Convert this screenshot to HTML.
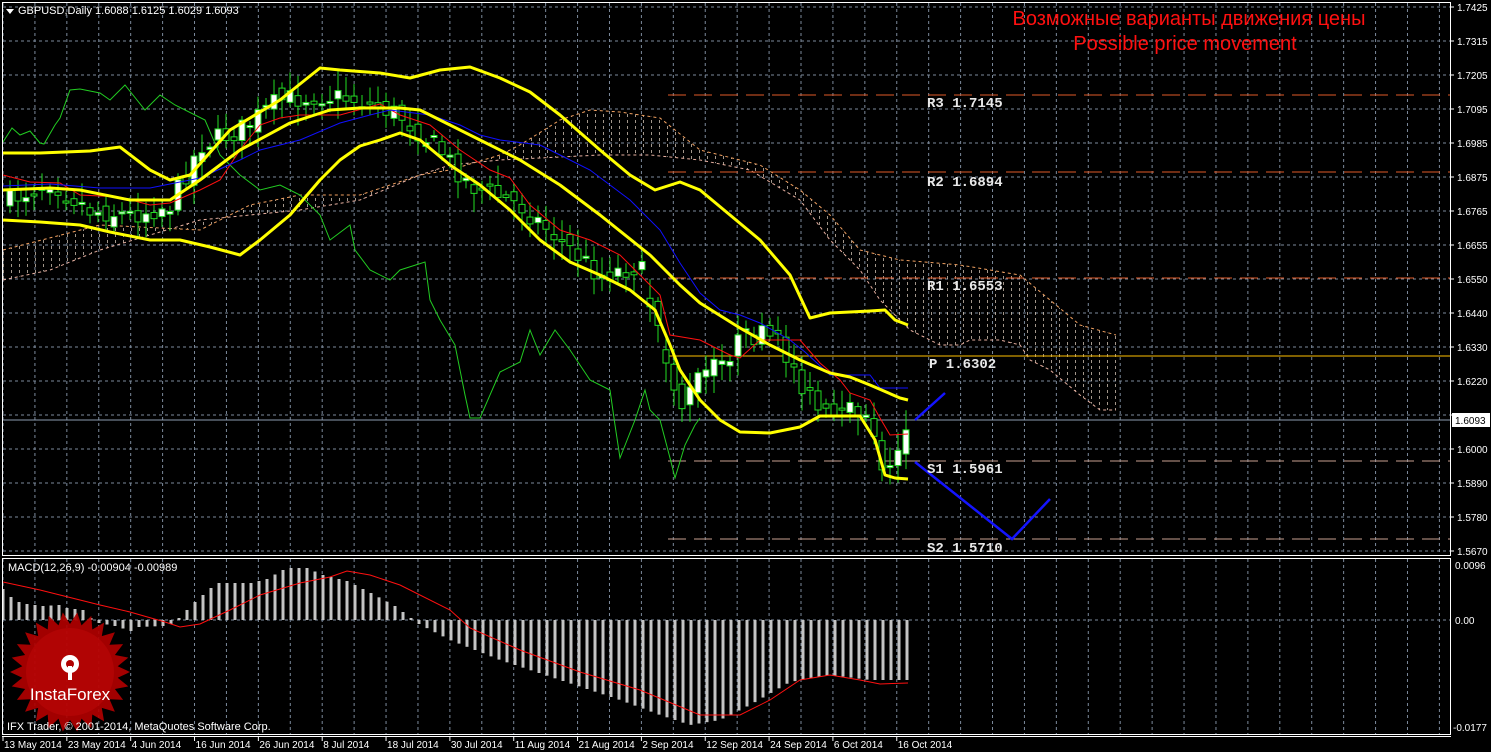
<!DOCTYPE html>
<html><head><meta charset="utf-8">
<style>
html,body{margin:0;padding:0;background:#000;}
body{width:1491px;height:752px;overflow:hidden;}
svg{display:block;}
text{font-family:"Liberation Sans",sans-serif;}
text.mono{font-family:"Liberation Mono",monospace;}
</style></head>
<body>
<svg id="c" width="1491" height="752" viewBox="0 0 1491 752" xmlns="http://www.w3.org/2000/svg">
<defs>
<pattern id="hatch" x="3" y="0" width="8" height="6" patternUnits="userSpaceOnUse">
<rect x="0" y="0" width="1" height="3" fill="#d8c8b8" opacity="0.75"/>
</pattern>
<clipPath id="mainclip"><rect x="3" y="3" width="1447" height="552"/></clipPath>
<clipPath id="macdclip"><rect x="3" y="559" width="1447" height="174"/></clipPath>
</defs>
<rect x="0" y="0" width="1491" height="752" fill="#000"/>
<g id="grid"></g>
<g clip-path="url(#mainclip)">
<polygon fill="url(#hatch)" points="3,250 100,225 200,230 250,205 300,195 360,195 420,175 450,170 500,155 520,145 560,120 590,110 620,112 660,118 700,150 760,165 800,190 830,215 860,250 880,255 900,260 960,265 1020,275 1050,300 1080,325 1116,335 1116,410 1100,410 1080,395 1050,370 1030,360 1020,345 1000,340 970,340 960,345 940,345 910,330 880,300 860,270 830,240 800,200 750,170 700,160 650,155 600,155 500,160 450,165 420,175 360,200 300,210 200,220 100,250 50,270 3,280"/>
<polyline fill="none" stroke="#f0a060" stroke-dasharray="3,3" points="3,250 100,225 200,230 250,205 300,195 360,195 420,175 450,170 500,155 520,145 560,120 590,110 620,112 660,118 700,150 760,165 800,190 830,215 860,250 880,255 900,260 960,265 1020,275 1050,300 1080,325 1116,335"/>
<polyline fill="none" stroke="#e8b0a0" stroke-dasharray="3,3" points="3,280 50,270 100,250 200,220 300,210 360,200 420,175 450,165 500,160 600,155 650,155 700,160 750,170 800,200 830,240 860,270 880,300 910,330 940,345 960,345 970,340 1000,340 1020,345 1030,360 1050,370 1080,395 1100,410 1116,410"/>
<line x1="668" y1="95" x2="1450" y2="95" stroke="#e05a28" stroke-dasharray="18,8"/>
<line x1="668" y1="172" x2="1450" y2="172" stroke="#e05a28" stroke-dasharray="18,8"/>
<line x1="668" y1="278" x2="1450" y2="278" stroke="#e05a28" stroke-dasharray="18,8"/>
<line x1="668" y1="356" x2="1450" y2="356" stroke="#ffc000" stroke-width="1"/>
<line x1="668" y1="461" x2="1450" y2="461" stroke="#c8a090" stroke-dasharray="18,8"/>
<line x1="668" y1="539" x2="1450" y2="539" stroke="#c8a090" stroke-dasharray="18,8"/>
<line x1="3" y1="420" x2="1450" y2="420" stroke="#8c9cb0"/>
<polyline fill="none" stroke="#22cc22" points="3,142 12,128 20,135 30,131 40,143 44,144 55,125 60,118 70,90 80,89 100,93 110,100 125,85 145,110 160,95 175,105 205,120 220,155 240,175 260,190 280,185 300,195 320,215 330,240 350,225 355,250 370,270 390,280 400,270 425,262 430,300 440,320 455,345 465,395 470,418 480,418 500,372 520,362 530,330 540,355 555,330 570,350 590,380 610,390 615,425 620,458 635,420 645,390 650,410 660,420 670,458 675,478 685,445 695,425 700,418"/>
<g id="candles"></g>
<polyline fill="none" stroke="#ff1010" points="3,175 30,182 60,183 80,195 100,196 120,197 150,205 170,203 200,190 220,180 240,150 260,125 280,118 300,115 340,115 380,104 400,115 430,125 460,150 490,170 510,178 530,205 560,230 590,240 620,255 660,295 670,335 700,340 730,355 740,358 760,340 800,340 820,363 840,380 850,393 870,400 880,418 890,435 908,434"/>
<polyline fill="none" stroke="#1010ff" points="3,186 50,184 100,188 150,188 200,178 240,160 260,150 300,140 340,123 370,115 390,110 430,115 460,125 480,135 500,140 540,145 560,155 590,170 630,200 660,230 680,263 700,293 720,310 740,315 760,323 790,340 805,352 830,375 870,375 880,388 908,388"/>
<g fill="none" stroke="#ffff00" stroke-width="3" stroke-linejoin="round">
<polyline points="3,153 40,153 90,151 120,147 150,170 170,180 190,175 230,130 280,100 320,68 340,70 380,73 410,78 440,70 470,67 500,78 530,92 560,115 600,150 630,175 655,190 680,182 700,190 730,215 760,240 790,275 810,318 830,313 870,311 885,310 895,320 908,325"/>
<polyline points="3,190 50,188 80,190 130,200 170,200 200,180 240,150 290,123 330,110 360,108 400,108 420,110 450,125 480,140 520,160 560,185 600,215 650,255 680,285 700,303 740,328 770,345 800,360 830,373 850,377 870,385 900,398 908,400"/>
<polyline points="3,220 40,222 80,225 110,232 150,240 180,240 210,247 240,255 260,240 290,215 320,180 340,160 360,146 380,140 400,133 420,140 450,165 480,185 510,210 540,240 570,262 600,275 630,290 655,310 670,345 680,370 700,400 720,420 740,432 770,433 800,427 820,416 860,416 875,440 885,475 895,478 908,479"/>
</g>
<g fill="none" stroke="#1414ff" stroke-width="2.5">
<polyline points="915,420 945,393"/>
<polyline points="915,462 1012,539 1050,499"/>
</g>
<g fill="#e8e8e8" font-weight="bold" font-size="14">
<text class="mono" x="927" y="107">R3 1.7145</text>
<text class="mono" x="927" y="186">R2 1.6894</text>
<text class="mono" x="927" y="290">R1 1.6553</text>
<text class="mono" x="929" y="368">P  1.6302</text>
<text class="mono" x="927" y="473">S1 1.5961</text>
<text class="mono" x="927" y="552">S2 1.5710</text>
</g>
</g>
<g clip-path="url(#macdclip)">
<g id="hist"></g>
<polyline fill="none" stroke="#ff1010" points="3,582 40,590 100,605 130,612 165,622 180,627 200,624 230,610 260,595 300,583 330,577 347,571 370,575 400,585 450,610 470,628 520,650 580,672 640,690 700,715 740,715 770,700 800,680 830,675 860,680 880,684 908,683"/>
</g>
<g transform="translate(70,672)">
<polygon id="star" fill="#b00000" opacity="0.92"/>
<circle r="44" fill="#c00808" opacity="0.5"/>
<g fill="#fff">
<circle cx="0" cy="-8" r="9"/>
<circle cx="0" cy="-8" r="4" fill="#b00000"/>
<rect x="-2" y="-6" width="4" height="14" fill="#fff"/>
</g>
<text x="0" y="28" fill="#fff" font-size="17" text-anchor="middle">InstaForex</text>
</g>
<rect x="2.5" y="2.5" width="1448" height="553" fill="none" stroke="#fff"/>
<rect x="2.5" y="558.5" width="1448" height="176" fill="none" stroke="#fff"/>
<line x1="2" y1="736.5" x2="1451" y2="736.5" stroke="#fff"/>
<polygon points="6,9 14,9 10,14" fill="#fff"/>
<text x="18" y="14" fill="#fff" font-size="11">GBPUSD,Daily  1.6088 1.6125 1.6029 1.6093</text>
<text x="8" y="571" fill="#fff" font-size="11">MACD(12,26,9) -0.00904 -0.00989</text>
<text x="7" y="730" fill="#fff" font-size="11">IFX Trader, © 2001-2014, MetaQuotes Software Corp.</text>
<text x="1189" y="25" fill="#ff1010" font-size="20" text-anchor="middle">Возможные варианты движения цены</text>
<text x="1185" y="50" fill="#ff1010" font-size="20" text-anchor="middle">Possible price movement</text>
<rect x="1452" y="413" width="38" height="14" fill="#fff"/>
<text x="1455" y="424" fill="#000" font-size="10">1.6093</text>
<g id="axis" fill="#fff" font-size="10"></g>
</svg>
<script>
(function(){
var NS="http://www.w3.org/2000/svg";
function el(p,t,a,txt){var e=document.createElementNS(NS,t);for(var k in a)e.setAttribute(k,a[k]);if(txt)e.textContent=txt;p.appendChild(e);return e;}
var grid=document.getElementById('grid'),axis=document.getElementById('axis');
var gc="#7c8a9c";
for(var i=0;i<46;i++){var x=3+i*31.92;if(x>1450)break;
 el(grid,'line',{x1:x,y1:3,x2:x,y2:555,stroke:gc,'stroke-dasharray':'3,3'});
 el(grid,'line',{x1:x,y1:559,x2:x,y2:734,stroke:gc,'stroke-dasharray':'3,3'});}
var labs=["1.7425","1.7315","1.7205","1.7095","1.6985","1.6875","1.6765","1.6655","1.6550","1.6440","1.6330","1.6220","1.6110","1.6000","1.5890","1.5780","1.5670"];
for(var j=0;j<17;j++){var y=7+j*34;
 el(grid,'line',{x1:3,y1:y,x2:1450,y2:y,stroke:gc,'stroke-dasharray':'3,3'});
 el(grid,'line',{x1:1450,y1:y,x2:1454,y2:y,stroke:'#fff'});
 if(j!=12) el(axis,'text',{x:1457,y:y+4},labs[j]);}
el(grid,'line',{x1:3,y1:620,x2:1450,y2:620,stroke:gc,'stroke-dasharray':'3,3'});
el(axis,'text',{x:1455,y:569},"0.0096");
el(axis,'text',{x:1455,y:624},"0.00");
el(axis,'text',{x:1453,y:731},"-0.0177");
var dates=["13 May 2014","23 May 2014","4 Jun 2014","16 Jun 2014","26 Jun 2014","8 Jul 2014","18 Jul 2014","30 Jul 2014","11 Aug 2014","21 Aug 2014","2 Sep 2014","12 Sep 2014","24 Sep 2014","6 Oct 2014","16 Oct 2014"];
for(var d=0;d<dates.length;d++){var x=3+d*63.84;
 el(axis,'line',{x1:x,y1:736,x2:x,y2:741,stroke:'#fff'});
 el(axis,'text',{x:x+1,y:748},dates[d]);}
function interp(pts,x){for(var i=0;i<pts.length-1;i++){if(x>=pts[i][0]&&x<=pts[i+1][0]){var t=(x-pts[i][0])/(pts[i+1][0]-pts[i][0]);return pts[i][1]+t*(pts[i+1][1]-pts[i][1]);}}return pts[pts.length-1][1];}
var seed=7;function rnd(){seed=(seed*16807)%2147483647;return seed/2147483647;}
var cp=[[10,200],[50,180],[90,210],[130,215],[170,205],[200,145],[240,130],[280,100],[320,95],[360,100],[400,115],[440,150],[470,185],[520,205],[560,240],[600,275],[640,265],[660,340],[680,410],[700,375],[720,365],[740,340],[760,335],[780,345],[800,380],[820,415],[840,420],[860,405],[880,460],[890,470],[907,420]];
var cg=document.getElementById('candles');var prev=interp(cp,10);
for(var x=10;x<=907;x+=8){
 var c=interp(cp,x)+(rnd()-0.5)*22;var o=prev+(rnd()-0.5)*14;
 if(x>=650&&x<=690&&rnd()<0.4){o=c-40*rnd();}
 var top=Math.min(o,c),bot=Math.max(o,c);var hi=top-4-rnd()*16,lo=bot+4+rnd()*16;
 el(cg,'line',{x1:x,y1:hi,x2:x,y2:lo,stroke:'#22dd22'});
 var h=Math.max(bot-top,2);
 el(cg,'rect',{x:x-3,y:top,width:6,height:h,fill:(c<o?'#fff':'#000'),stroke:'#22dd22'});
 prev=c;}
var hp=[[3,31],[11,23],[19,18],[27,16],[43,14],[59,15],[67,12],[83,10],[91,2],[99,-3],[115,-6],[131,-11],[139,-7],[163,-6],[171,-4],[179,2],[195,18],[211,32],[219,37],[251,37],[267,41],[283,50],[291,52],[307,52],[323,45],[347,39],[371,27],[395,14],[411,2],[419,-4],[450,-20],[500,-40],[560,-60],[620,-80],[660,-95],[690,-105],[720,-100],[750,-85],[790,-62],[830,-55],[870,-60],[907,-60]];
var hg=document.getElementById('hist');
for(var x=3;x<=907;x+=8){var v=interp(hp,x);
 el(hg,'rect',{x:x-1.5,y:v>0?620-v:620,width:3,height:Math.abs(v),fill:'#c4c4c4'});}
var s=[],n=26;for(var k=0;k<n*2;k++){var r=(k%2)?48:60,a=k*Math.PI/n;s.push((r*Math.cos(a)).toFixed(1)+','+(r*Math.sin(a)).toFixed(1));}
document.getElementById('star').setAttribute('points',s.join(' '));
})();
</script>
</body></html>
